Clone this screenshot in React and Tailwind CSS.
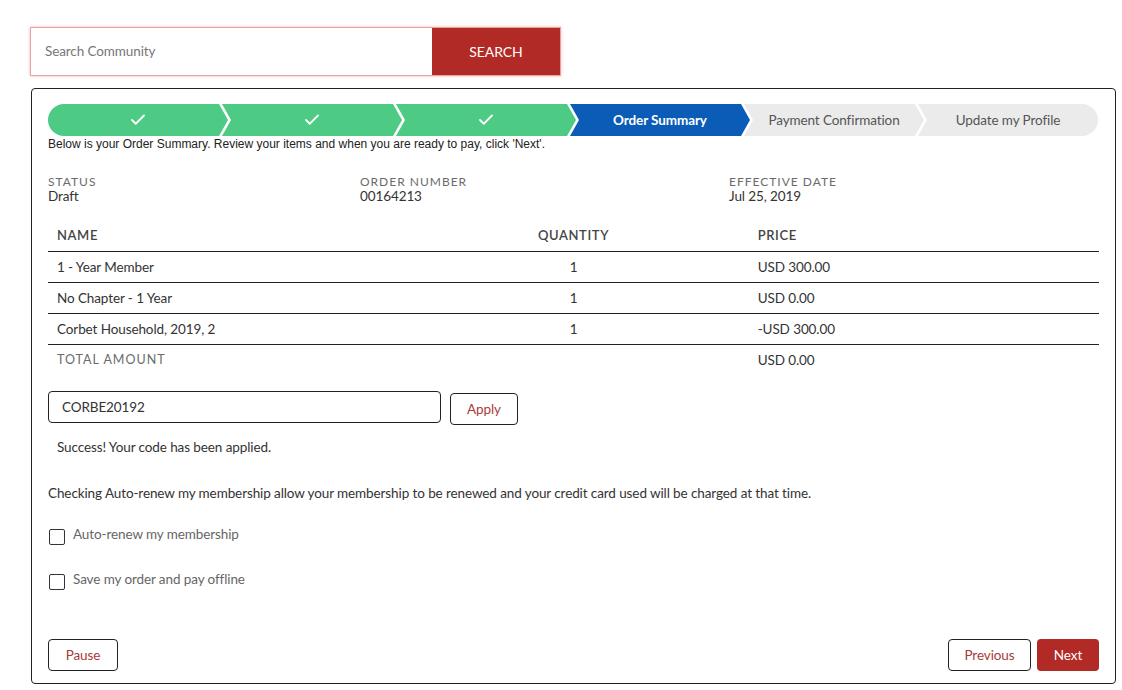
import { Check } from 'lucide-react'

const steps = [
  { label: null, state: 'done' },
  { label: null, state: 'done' },
  { label: null, state: 'done' },
  { label: 'Order Summary', state: 'active' },
  { label: 'Payment Confirmation', state: 'todo' },
  { label: 'Update my Profile', state: 'todo' },
]

const items = [
  { name: '1 - Year Member', qty: 1, price: 'USD 300.00' },
  { name: 'No Chapter - 1 Year', qty: 1, price: 'USD 0.00' },
  { name: 'Corbet Household, 2019, 2', qty: 1, price: '-USD 300.00' },
]

function Stepper() {
  return (
    <div className="flex h-8">
      {steps.map((step, i) => {
        const first = i === 0
        const last = i === steps.length - 1
        const shape = first
          ? 'rounded-l-full [clip-path:polygon(0_0,calc(100%-9px)_0,100%_50%,calc(100%-9px)_100%,0_100%)]'
          : last
            ? 'rounded-r-full [clip-path:polygon(0_0,100%_0,100%_100%,0_100%,9px_50%)]'
            : '[clip-path:polygon(0_0,calc(100%-9px)_0,100%_50%,calc(100%-9px)_100%,0_100%,9px_50%)]'
        const color =
          step.state === 'done'
            ? 'bg-[#4dca84] text-white'
            : step.state === 'active'
              ? 'bg-[#0b5cb7] text-white font-bold'
              : 'bg-[#ebebeb] text-[#555]'
        return (
          <div
            key={i}
            className={`flex w-[180px] shrink-0 items-center justify-center text-[13.5px] tracking-[-0.1px] ${first ? '' : '-ml-[6px]'} ${shape} ${color}`}
          >
            {step.label ? step.label : <Check className="h-[18px] w-[18px]" strokeWidth={2.4} />}
          </div>
        )
      })}
    </div>
  )
}

function InfoBlock({ label, value }) {
  return (
    <div>
      <p className="text-[12px] uppercase leading-[14px] tracking-[1px] text-[#6b6b6b]">{label}</p>
      <p className="text-[13.5px] leading-[14px] tracking-[-0.1px] text-[#333]">{value}</p>
    </div>
  )
}

export default function App() {
  return (
    <div className="min-h-screen bg-white pl-[30px] pt-[27px] font-['Lato','Noto_Sans',sans-serif] text-[13.5px] tracking-[-0.1px] text-[#333]">
      <div className="flex h-[49px] w-[531px] border border-[#e6a5a2] shadow-[0_0_3px_rgba(200,60,60,0.35)]">
        <input
          className="flex-1 bg-white px-[14px] text-[13.5px] text-[#333] outline-none placeholder:text-[#777]"
          placeholder="Search Community"
        />
        <button className="w-[128px] bg-[#b22a25] text-[14px] text-white">SEARCH</button>
      </div>

      <div className="mt-[12px] ml-[1px] w-[1085px] rounded-[4px] border border-[#222] px-4 pb-[12px] pt-[15px]">
        <Stepper />
        <p className="font-['Liberation_Sans',Arial,sans-serif] text-[12px] leading-[16px] tracking-normal text-[#222]">
          Below is your Order Summary. Review your items and when you are ready to pay, click 'Next'.
        </p>

        <div className="mt-[23px] grid grid-cols-[312px_369px_1fr]">
          <InfoBlock label="Status" value="Draft" />
          <InfoBlock label="Order Number" value="00164213" />
          <InfoBlock label="Effective Date" value="Jul 25, 2019" />
        </div>

        <div className="mt-[17px]">
          <div className="grid h-[32px] grid-cols-3 items-center border-b border-[#222] text-[13px] font-semibold uppercase tracking-[0.6px] text-[#444]">
            <div className="pl-[9px]">Name</div>
            <div className="text-center">Quantity</div>
            <div className="pl-[9px]">Price</div>
          </div>
          {items.map((item) => (
            <div key={item.name} className="grid h-[31px] grid-cols-3 items-center border-b border-[#222] text-[#333]">
              <div className="pl-[9px]">{item.name}</div>
              <div className="text-center">{item.qty}</div>
              <div className="pl-[9px]">{item.price}</div>
            </div>
          ))}
          <div className="grid h-[31px] grid-cols-3 items-center">
            <div className="pl-[9px] text-[12.5px] uppercase tracking-[1px] text-[#6b6b6b]">Total Amount</div>
            <div />
            <div className="pl-[9px] text-[#333]">USD 0.00</div>
          </div>
        </div>

        <div className="mt-[15px] flex items-start gap-[9px]">
          <input
            defaultValue="CORBE20192"
            className="h-[32px] w-[393px] rounded-[4px] border border-[#222] px-[13px] text-[13.5px] text-[#333] outline-none"
          />
          <button className="mt-[2px] h-[32px] w-[68px] rounded-[4px] border border-[#222] bg-white text-[#a83a38]">
            Apply
          </button>
        </div>

        <p className="mt-[13px] pl-[9px] leading-[18px] text-[#333]">Success! Your code has been applied.</p>

        <p className="mt-[28px] leading-[18px] text-[#333]">
          Checking Auto-renew my membership allow your membership to be renewed and your credit card used will be charged at that time.
        </p>

        <div className="mt-[27px] flex flex-col gap-[29px]">
          <label className="flex items-center gap-[8px] pl-[1px] text-[#666]">
            <span className="h-[16px] w-[16px] rounded-[2px] border border-[#333] bg-white" />
            <span className="-mt-[6px]">Auto-renew my membership</span>
          </label>
          <label className="flex items-center gap-[8px] pl-[1px] text-[#666]">
            <span className="h-[16px] w-[16px] rounded-[2px] border border-[#333] bg-white" />
            <span className="-mt-[6px]">Save my order and pay offline</span>
          </label>
        </div>

        <div className="mt-[49px] flex items-center justify-between">
          <button className="h-[32px] w-[70px] rounded-[4px] border border-[#222] bg-white text-[#a83a38]">
            Pause
          </button>
          <div className="flex gap-[6px]">
            <button className="h-[32px] w-[83px] rounded-[4px] border border-[#222] bg-white text-[#a83a38]">
              Previous
            </button>
            <button className="h-[32px] w-[62px] rounded-[4px] bg-[#b22a25] text-white">Next</button>
          </div>
        </div>
      </div>
    </div>
  )
}
